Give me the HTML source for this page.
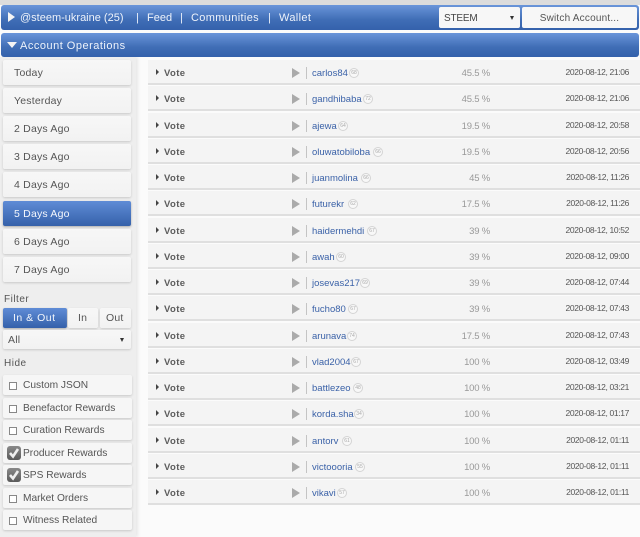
<!DOCTYPE html>
<html><head><meta charset="utf-8"><style>
html,body{margin:0;padding:0}
body{width:640px;height:537px;overflow:hidden;position:relative;background:#fbfbfb;font-family:"Liberation Sans",sans-serif;color:#444}
#w{left:0;top:0;width:640px;height:537px;overflow:hidden;filter:blur(.35px)}
div,span{position:absolute;white-space:nowrap;box-sizing:border-box}
.bar{left:1px;width:638px;background:linear-gradient(#6a95da,#3f6db5 60%,#3461ab);border-radius:3px}
.wt{color:#eef3fb;font-size:11px;line-height:14px;letter-spacing:.4px}
.btn{left:3px;width:128px;height:25px;background:linear-gradient(#f7f7f7,#f2f2f2);border-radius:2px;box-shadow:0 1px 2px #c8c8c8;font-size:10.5px;line-height:27px;padding-left:11px;color:#555;letter-spacing:.2px}
.on{background:linear-gradient(#5f8cd6,#3561aa);color:#f4f7fc;box-shadow:0 1px 2px #aaa}
.row{left:148px;width:492px;height:25px;background:#f4f4f4;border-bottom:2px solid #dfdfdf}
.row b{position:absolute;left:16px;top:8px;font-size:9.5px;line-height:12px;letter-spacing:.4px;color:#5c5c5c}
.tri{left:8px;top:9px;width:0;height:0;border-left:3px solid #444;border-top:3px solid transparent;border-bottom:3px solid transparent}
.play{left:144px;top:8px;width:0;height:0;border-left:8px solid #aaa;border-top:5px solid transparent;border-bottom:5px solid transparent}
.sep{left:158px;top:7px;width:1px;height:12px;background:#c4c4c4}
.nm{left:164px;top:8px;font-size:9.5px;line-height:12px;color:#3b62a8}
.rp{top:8px;width:10px;height:10px;border:1px solid #d4d4d4;border-radius:50%;font-size:5px;line-height:8px;text-align:center;color:#aaa;background:#f8f8f8}
.pc{left:282px;width:60px;top:8px;text-align:right;font-size:9.5px;line-height:12px;color:#999;letter-spacing:-.2px}
.dt{right:11px;top:6px;font-size:8.5px;line-height:12px;color:#555;letter-spacing:-.35px}
.lab{left:4px;font-size:10px;line-height:12px;color:#555;letter-spacing:.5px}
.chk{left:3px;width:129px;height:20px;background:#f6f6f6;border-radius:2px;box-shadow:0 1px 2px #c8c8c8;font-size:10.2px;line-height:21px;padding-left:20px;color:#555}
.box{left:6px;top:7px;width:8px;height:8px;background:#fff;border:1px solid #888}
.ck{left:4px;top:3px;width:14px;height:14px;border-radius:3px;background:linear-gradient(#8a8a8a,#5a5a5a)}
</style></head><body><div id="w">
<div style="left:0;top:0;width:640px;height:5px;background:#dcdcdc"></div>
<div style="left:0;top:57px;width:136px;height:480px;background:#eeeeee;box-shadow:2px 0 3px #e8e8e8"></div>
<div class="bar" style="top:5px;height:25px"></div>
<div class="bar" style="top:33px;height:24px"></div>
<div style="left:8px;top:12px;width:0;height:0;border-left:7px solid #f4f4f4;border-top:5.5px solid transparent;border-bottom:5.5px solid transparent"></div>
<div class="wt" style="left:20px;top:11px;letter-spacing:0">@steem-ukraine (25)</div>
<div class="wt" style="left:136px;top:11px">|</div>
<div class="wt" style="left:147px;top:11px;letter-spacing:0">Feed</div>
<div class="wt" style="left:180px;top:11px">|</div>
<div class="wt" style="left:191px;top:11px;letter-spacing:.35px">Communities</div>
<div class="wt" style="left:268px;top:11px">|</div>
<div class="wt" style="left:279px;top:11px;letter-spacing:.35px">Wallet</div>
<div style="left:439px;top:7px;width:81px;height:21px;background:#f7f7f7;border-radius:2px;font-size:10px;line-height:23px;padding-left:5px;color:#444;letter-spacing:-.2px">STEEM</div>
<div style="left:510px;top:16px;width:0;height:0;border-top:4px solid #333;border-left:2px solid transparent;border-right:2px solid transparent"></div>
<div style="left:522px;top:7px;width:115px;height:21px;background:#f7f7f7;border-radius:2px;font-size:10px;line-height:23px;text-align:center;color:#555;letter-spacing:.2px">Switch Account...</div>
<div style="left:7px;top:42px;width:0;height:0;border-top:6px solid #f4f4f4;border-left:5px solid transparent;border-right:5px solid transparent"></div>
<div class="wt" style="left:20px;top:39px;letter-spacing:.5px">Account Operations</div>

<div class="btn" style="top:60px">Today</div>
<div class="btn" style="top:88px">Yesterday</div>
<div class="btn" style="top:116px">2 Days Ago</div>
<div class="btn" style="top:144px">3 Days Ago</div>
<div class="btn" style="top:172px">4 Days Ago</div>
<div class="btn on" style="top:201px">5 Days Ago</div>
<div class="btn" style="top:229px">6 Days Ago</div>
<div class="btn" style="top:257px">7 Days Ago</div>

<div class="lab" style="top:294px">Filter</div>
<div class="btn on" style="top:308px;height:20px;width:64px;line-height:21px;padding-left:10px;letter-spacing:.5px">In &amp; Out</div>
<div class="btn" style="left:68px;top:308px;height:20px;width:30px;line-height:21px;padding-left:10px">In</div>
<div class="btn" style="left:100px;top:308px;height:20px;width:31px;line-height:21px;padding-left:6px">Out</div>
<div class="btn" style="top:330px;height:19px;line-height:20px;padding-left:5px">All</div>
<div style="left:120px;top:338px;width:0;height:0;border-top:4px solid #333;border-left:2px solid transparent;border-right:2px solid transparent"></div>
<div class="lab" style="top:358px">Hide</div>

<div class="chk" style="top:375px"><span class="box"></span>Custom JSON</div>
<div class="chk" style="top:398px"><span class="box"></span>Benefactor Rewards</div>
<div class="chk" style="top:420px"><span class="box"></span>Curation Rewards</div>
<div class="chk" style="top:443px"><span class="ck"><svg width="14" height="14" style="position:absolute;left:0;top:0"><path d="M3 7l3 3.5 5-7.5" fill="none" stroke="#eee" stroke-width="2.6"/></svg></span>Producer Rewards</div>
<div class="chk" style="top:465px"><span class="ck"><svg width="14" height="14" style="position:absolute;left:0;top:0"><path d="M3 7l3 3.5 5-7.5" fill="none" stroke="#eee" stroke-width="2.6"/></svg></span>SPS Rewards</div>
<div class="chk" style="top:488px"><span class="box"></span>Market Orders</div>
<div class="chk" style="top:510px"><span class="box"></span>Witness Related</div>

<div class="row" style="top:60px"><span class="tri"></span><b>Vote</b><span class="play"></span><span class="sep"></span><span class="nm">carlos84</span><span class="rp" style="left:201px">68</span><span class="pc">45.5 %</span><span class="dt">2020-08-12, 21:06</span></div>
<div class="row" style="top:86px"><span class="tri"></span><b>Vote</b><span class="play"></span><span class="sep"></span><span class="nm">gandhibaba</span><span class="rp" style="left:215px">72</span><span class="pc">45.5 %</span><span class="dt">2020-08-12, 21:06</span></div>
<div class="row" style="top:113px"><span class="tri"></span><b>Vote</b><span class="play"></span><span class="sep"></span><span class="nm">ajewa</span><span class="rp" style="left:190px">64</span><span class="pc">19.5 %</span><span class="dt">2020-08-12, 20:58</span></div>
<div class="row" style="top:139px"><span class="tri"></span><b>Vote</b><span class="play"></span><span class="sep"></span><span class="nm">oluwatobiloba</span><span class="rp" style="left:225px">66</span><span class="pc">19.5 %</span><span class="dt">2020-08-12, 20:56</span></div>
<div class="row" style="top:165px"><span class="tri"></span><b>Vote</b><span class="play"></span><span class="sep"></span><span class="nm">juanmolina</span><span class="rp" style="left:213px">66</span><span class="pc">45 %</span><span class="dt">2020-08-12, 11:26</span></div>
<div class="row" style="top:191px"><span class="tri"></span><b>Vote</b><span class="play"></span><span class="sep"></span><span class="nm">futurekr</span><span class="rp" style="left:200px">62</span><span class="pc">17.5 %</span><span class="dt">2020-08-12, 11:26</span></div>
<div class="row" style="top:218px"><span class="tri"></span><b>Vote</b><span class="play"></span><span class="sep"></span><span class="nm">haidermehdi</span><span class="rp" style="left:219px">67</span><span class="pc">39 %</span><span class="dt">2020-08-12, 10:52</span></div>
<div class="row" style="top:244px"><span class="tri"></span><b>Vote</b><span class="play"></span><span class="sep"></span><span class="nm">awah</span><span class="rp" style="left:188px">60</span><span class="pc">39 %</span><span class="dt">2020-08-12, 09:00</span></div>
<div class="row" style="top:270px"><span class="tri"></span><b>Vote</b><span class="play"></span><span class="sep"></span><span class="nm">josevas217</span><span class="rp" style="left:212px">69</span><span class="pc">39 %</span><span class="dt">2020-08-12, 07:44</span></div>
<div class="row" style="top:296px"><span class="tri"></span><b>Vote</b><span class="play"></span><span class="sep"></span><span class="nm">fucho80</span><span class="rp" style="left:200px">67</span><span class="pc">39 %</span><span class="dt">2020-08-12, 07:43</span></div>
<div class="row" style="top:323px"><span class="tri"></span><b>Vote</b><span class="play"></span><span class="sep"></span><span class="nm">arunava</span><span class="rp" style="left:199px">74</span><span class="pc">17.5 %</span><span class="dt">2020-08-12, 07:43</span></div>
<div class="row" style="top:349px"><span class="tri"></span><b>Vote</b><span class="play"></span><span class="sep"></span><span class="nm">vlad2004</span><span class="rp" style="left:203px">67</span><span class="pc">100 %</span><span class="dt">2020-08-12, 03:49</span></div>
<div class="row" style="top:375px"><span class="tri"></span><b>Vote</b><span class="play"></span><span class="sep"></span><span class="nm">battlezeo</span><span class="rp" style="left:205px">48</span><span class="pc">100 %</span><span class="dt">2020-08-12, 03:21</span></div>
<div class="row" style="top:401px"><span class="tri"></span><b>Vote</b><span class="play"></span><span class="sep"></span><span class="nm">korda.sha</span><span class="rp" style="left:206px">34</span><span class="pc">100 %</span><span class="dt">2020-08-12, 01:17</span></div>
<div class="row" style="top:428px"><span class="tri"></span><b>Vote</b><span class="play"></span><span class="sep"></span><span class="nm">antorv</span><span class="rp" style="left:194px">61</span><span class="pc">100 %</span><span class="dt">2020-08-12, 01:11</span></div>
<div class="row" style="top:454px"><span class="tri"></span><b>Vote</b><span class="play"></span><span class="sep"></span><span class="nm">victoooria</span><span class="rp" style="left:207px">55</span><span class="pc">100 %</span><span class="dt">2020-08-12, 01:11</span></div>
<div class="row" style="top:480px"><span class="tri"></span><b>Vote</b><span class="play"></span><span class="sep"></span><span class="nm">vikavi</span><span class="rp" style="left:189px">57</span><span class="pc">100 %</span><span class="dt">2020-08-12, 01:11</span></div>
</div></body></html>
